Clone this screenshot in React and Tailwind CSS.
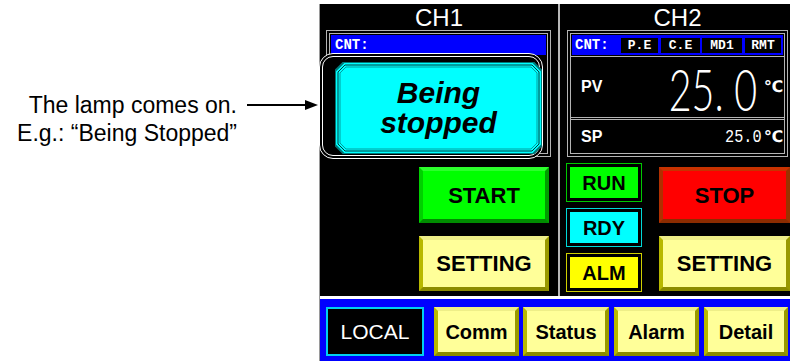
const mono = "font-['Liberation_Mono','DejaVu_Sans_Mono',monospace]";

const Bevel = ({ className, children }) => (
  <div
    className={`flex items-center justify-center border-[4px] text-black font-bold ${className}`}
  >
    {children}
  </div>
);

const Lamp = ({ className, children }) => (
  <div className={`h-[39px] border p-[3px] ${className}`}>
    {children}
  </div>
);

const Annotation = () => (
  <div className="w-[319px] flex flex-col items-end pt-[91px] pr-[1px] text-[23px] leading-[28px] text-black">
    <div className="flex items-center">
      <span>The lamp comes on.</span>
      <svg width="71" height="12" viewBox="0 0 71 12" className="ml-[10px]">
        <line x1="0" y1="6" x2="60" y2="6" stroke="#000" strokeWidth="2" />
        <polygon points="58,1 71,6 58,11" fill="#000" />
      </svg>
    </div>
    <span className="mr-[81px]">E.g.: “Being Stopped”</span>
  </div>
);

const BigLamp = () => (
  <div className="absolute left-[-1px] top-[49px] w-[224px] h-[106px] rounded-[14px] border border-white bg-black p-[2px]">
    <div className="relative h-full rounded-[11px] border border-white">
      <div className="absolute left-[12px] top-[5px] w-[207px] h-[92px] flex items-center justify-center">
        <svg width="207" height="92" viewBox="0 0 207 92" className="absolute inset-0">
          <polygon points="9,0 198,0 207,9 207,83 198,92 9,92 0,83 0,9" fill="#00ffff" stroke="#007878" strokeWidth="2" />
          <polygon points="10,3 197,3 204,10 204,82 197,89 10,89 3,82 3,10" fill="none" stroke="#003c3c" strokeWidth="1" />
          <polygon points="11,5 196,5 202,11 202,81 196,87 11,87 5,81 5,11" fill="none" stroke="#00a0a0" strokeWidth="1" />
        </svg>
        <div className="relative text-center italic font-bold text-[30px] leading-[30px] text-black">
          Being
          <br />
          stopped
        </div>
      </div>
    </div>
  </div>
);

const Channel1 = () => (
  <div className="relative w-[238px] flex flex-col">
    <div className="h-[26px] text-center text-white text-[24px] leading-[28px]">CH1</div>
    <div className="ml-[6px] w-[225px] h-[127px] border border-[#b4b4b4] p-[2px]">
      <div className="h-full border border-[#b4b4b4]">
        <div className={`h-[20px] m-[1px] bg-[#0000ff] pl-[4px] text-white text-[14px] leading-[20px] font-bold ${mono}`}>
          CNT:
        </div>
      </div>
    </div>
    <BigLamp />
    <Bevel className="self-end mr-[9px] mt-[10px] w-[130px] h-[56px] bg-[#00ff00] border-t-[#2cff2c] border-l-[#00d000] border-r-[#009c00] border-b-[#008c00] text-[22px]">
      START
    </Bevel>
    <Bevel className="self-end mr-[9px] mt-[13px] w-[130px] h-[55px] bg-[#ffff99] border-t-[#eeee88] border-l-[#b8b800] border-r-[#999900] border-b-[#8c8c00] text-[22px]">
      SETTING
    </Bevel>
  </div>
);

const Tag = ({ className, children }) => (
  <span className={`h-[15px] bg-black text-white text-center leading-[15px] ${className}`}>{children}</span>
);

const Channel2 = () => (
  <div className="w-[230px] flex flex-col">
    <div className="h-[26px] text-center text-white text-[24px] leading-[28px] pl-[5px]">CH2</div>
    <div className="ml-[7px] w-[221px] h-[127px] border border-[#b4b4b4] p-[2px]">
      <div className="h-full border border-[#b4b4b4] flex flex-col">
        <div className={`h-[20px] m-[1px] bg-[#0000ff] pl-[3px] flex items-center text-white text-[13px] font-bold ${mono}`}>
          <span className="w-[46px] text-[14px]">CNT:</span>
          <Tag className="w-[37px]">P.E</Tag>
          <Tag className="ml-[3px] w-[39px]">C.E</Tag>
          <Tag className="ml-[2px] w-[40px]">MD1</Tag>
          <Tag className="ml-[3px] w-[36px]">RMT</Tag>
        </div>
        <div className="h-[61px] border-t border-[#b4b4b4] flex items-center pl-[10px] pr-[1px] text-white">
          <span className="text-[16px] font-bold">PV</span>
          <span className="ml-auto mt-[4px] whitespace-pre font-['Lato',sans-serif] font-light text-[58px] leading-[58px] scale-x-[0.68] origin-right">
            25. 0
          </span>
          <span className="ml-[6px] text-[16px] font-bold font-['DejaVu_Sans',sans-serif]">℃</span>
        </div>
        <div className="h-[3px] border-y border-[#b4b4b4]" />
        <div className="flex-1 flex items-center pl-[10px] pr-[1px] text-white">
          <span className="text-[16px] font-bold">SP</span>
          <span className={`ml-auto text-[19px] leading-[20px] scale-x-[0.8] origin-right ${mono}`}>25.0</span>
          <span className="ml-[2px] text-[16px] font-bold font-['DejaVu_Sans',sans-serif]">℃</span>
        </div>
      </div>
    </div>
    <div className="flex mt-[6px]">
      <div className="ml-[6px] w-[76px] flex flex-col gap-[6px] text-[20px] font-bold text-black">
        <Lamp className="border-[#00c800]">
          <div className="h-full bg-[#00ff00] flex items-center justify-center">RUN</div>
        </Lamp>
        <Lamp className="border-[#00d8d8]">
          <div className="h-full bg-[#00ffff] flex items-center justify-center">RDY</div>
        </Lamp>
        <Lamp className="border-[#d0d000]">
          <div className="h-full bg-[#ffff00] flex items-center justify-center">ALM</div>
        </Lamp>
      </div>
      <div className="ml-[17px] w-[131px] shrink-0 flex flex-col pt-[4px]">
        <Bevel className="h-[56px] bg-[#ff0000] border-t-[#c83200] border-l-[#b03000] border-r-[#993300] border-b-[#8c2c00] text-[22px]">
          STOP
        </Bevel>
        <Bevel className="mt-[13px] h-[55px] bg-[#ffff99] border-t-[#eeee88] border-l-[#b8b800] border-r-[#999900] border-b-[#8c8c00] text-[22px]">
          SETTING
        </Bevel>
      </div>
    </div>
  </div>
);

const BottomBar = () => (
  <div className="h-[62px] bg-[#0000ff] flex items-start pt-[8px] pl-[6px] text-[20px]">
    <div className="w-[98px] h-[49px] border-2 border-[#00d0f0] bg-black text-white text-[21px] flex items-center justify-center">
      LOCAL
    </div>
    {[
      ["Comm", "ml-[10px] w-[85px]"],
      ["Status", "ml-[4px] w-[86px]"],
      ["Alarm", "ml-[5px] w-[85px]"],
      ["Detail", "ml-[5px] w-[84px]"],
    ].map(([label, cls]) => (
      <Bevel
        key={label}
        className={`h-[49px] bg-[#ffff99] border-t-[#eeee88] border-l-[#b8b800] border-r-[#999900] border-b-[#8c8c00] ${cls}`}
      >
        {label}
      </Bevel>
    ))}
  </div>
);

export default function App() {
  return (
    <div className="w-[790px] h-[361px] bg-white flex overflow-hidden font-['Liberation_Sans',Arial,sans-serif]">
      <Annotation />
      <div className="w-[471px] mt-[4px] flex flex-col border-l border-[#9a9a9a]">
        <div className="h-[292px] bg-black flex">
          <Channel1 />
          <div className="w-[2px] bg-[#b8b8b8]" />
          <Channel2 />
        </div>
        <div className="h-[3px] bg-white" />
        <BottomBar />
      </div>
    </div>
  );
}
